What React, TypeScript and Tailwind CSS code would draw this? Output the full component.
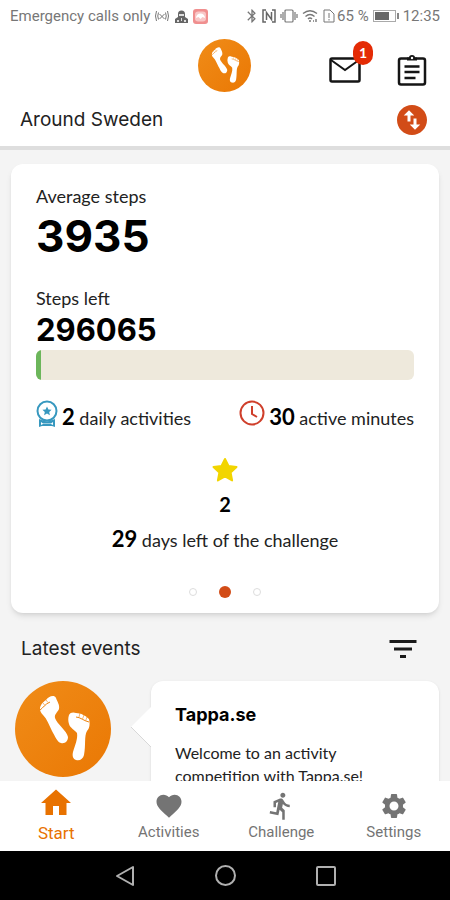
import { ReactNode } from "react"
import {
  MdSwapVerticalCircle,
  MdFilterList,
  MdHome,
  MdFavorite,
  MdDirectionsRun,
  MdSettings,
  MdBluetooth,
} from "react-icons/md"

const tabs = [
  { label: "Start", Icon: MdHome, active: true },
  { label: "Activities", Icon: MdFavorite },
  { label: "Challenge", Icon: MdDirectionsRun },
  { label: "Settings", Icon: MdSettings },
]

const Feet = ({ className }: { className: string }) => (
  <svg viewBox="0 0 96 96" className={className} aria-hidden="true">
    <defs>
      <linearGradient id="orange" x1="0" y1="0" x2="1" y2="1">
        <stop offset="0" stopColor="#f08c18" />
        <stop offset="1" stopColor="#ea7804" />
      </linearGradient>
    </defs>
    <circle cx="48" cy="48" r="48" fill="url(#orange)" />
    <g fill="#fff">
      <path d="M25 28C25 24 28 21 31 19C33 16 39 13 41 17C42 20 45 24 44 28C43 31 39 33 40 37C42 43 52 50 53 56C53 60 50 63 46 62C42 61 40 55 37 50C34 44 32 38 28 34C26 32 25 30 25 28Z" />
      <path d="M54 34C55 31 59 31 61 32C66 32 71 35 74 38C75 42 75 47 72 50C69 55 71 64 69 74C68 78 65 80 61 79C58 78 57 75 58 71C60 64 63 58 62 52C60 49 55 47 54 43C53 40 53 37 54 34Z" />
    </g>
    <g fill="none" stroke="#ee8510">
      <path d="M25 29C28 27 30 23 35 21" />
      <path d="M28 22l2 2.500M31 19l2 2.500" strokeWidth="0.600" />
      <path d="M61 36C65 36 69 40 74 41" />
      <path d="M65 32l-1 4M69 34l-1.500 4M72 36l-1.500 4" strokeWidth="0.600" />
    </g>
  </svg>
)

const Strong = ({ children }: { children: ReactNode }) => (
  <span className="text-[22px] font-bold text-black">{children}</span>
)

const StatusBar = () => (
  <div className="flex h-8 items-center justify-between pr-2.5 pl-2.5 font-['Roboto',sans-serif] text-[15px] text-[#777]">
    <div className="flex items-center gap-1">
      <span>Emergency calls only</span>
      <svg viewBox="0 0 15 14" className="h-3.5 w-4" fill="none" stroke="currentColor">
        <path d="M2 2Q0 7 2 12M4 3.500Q2.500 7 4 10.500M13 2Q15 7 13 12M11 3.500Q12.500 7 11 10.500M5 10L10 5M5 5L10 10" />
      </svg>
      <svg viewBox="0 0 15 15" className="size-[15px]">
        <path d="M4 5a3.500 3.500 0 0 1 7 0v3l3 2v4H1v-4l3-2z" fill="#666" />
        <path d="M5 5h5v2H5zM3 11h2v2H3zM10 11h2v2h-2zM7 9h1v3H7z" fill="#ddd" />
      </svg>
      <svg viewBox="0 0 15 15" className="size-[15px]">
        <rect width="15" height="15" rx="3" fill="#f08f8f" />
        <rect x="2" y="2.500" width="11" height="10" rx="3" fill="#fff" opacity="0.500" />
        <path d="M3 9a4.500 4.500 0 0 1 9 0l-2.500-1L7.500 10 5.500 8z" fill="#fff" />
      </svg>
    </div>
    <div className="flex items-center">
      <MdBluetooth className="size-4" />
      <svg viewBox="0 0 14 14" className="ml-0.5 size-3.5" fill="none" stroke="#666" strokeWidth="1.500">
        <path d="M4 1H1v12h3M10 1h3v12h-3M4.500 11V3.500l5 7V3" />
      </svg>
      <svg viewBox="0 0 18 14" className="ml-1 h-3.5 w-[18px]" fill="none" stroke="#777" strokeWidth="1.200">
        <rect x="5" y="1" width="8" height="12" rx="1" />
        <path d="M3 3v8M15 3v8M1 5v4M17 5v4" />
      </svg>
      <svg viewBox="0 0 17 14" className="ml-1 h-3.5 w-[17px]" fill="none" stroke="#777" strokeWidth="1.400">
        <path d="M1 4.500Q8 -1 15 4.500M3.500 7.500Q8 3.500 12.500 7.500M6 10Q8 8 10 10" />
        <path d="M7 12h2M11 12h1M14 10v3" />
      </svg>
      <svg viewBox="0 0 12 14" className="ml-1 h-4 w-3" fill="none" stroke="currentColor">
        <path d="M1 1h6l4 4v8H1zM6 4v5M6 10v1.500" />
      </svg>
      <span className="ml-0.5">65 %</span>
      <svg viewBox="0 0 26 12" className="mx-1 h-3 w-[26px]">
        <rect x="0.500" y="0.500" width="22" height="11" fill="none" stroke="#aaa" />
        <rect x="2" y="2" width="14" height="8" fill="#666" />
        <path d="M24 3h2v6h-2z" fill="#888" />
      </svg>
      <span>12:35</span>
    </div>
  </div>
)

const App = () => {
  return (
    <div className="flex h-screen flex-col overflow-hidden bg-[#f4f4f4] font-['Lato',sans-serif] text-[#222]">
      <header className="relative z-10 border-b-4 border-[#dedede] bg-white">
        <StatusBar />
        <div className="grid grid-cols-3 items-center px-5 pt-[7px]">
          <Feet className="col-start-2 size-[53px] justify-self-center" />
          <div className="flex items-center justify-end gap-9 pt-2 pr-[3px]">
            <button aria-label="Messages" className="relative">
              <svg viewBox="0 0 32 26" className="h-[26px] w-8" fill="none" stroke="#151515" strokeWidth="2.500">
                <rect x="1.500" y="1.500" width="29" height="23" rx="1.500" />
                <path d="M2 3L16 13L30 3" strokeWidth="2" />
              </svg>
              <span className="absolute -top-4 -right-3 flex h-6 w-5 items-center justify-center rounded-full bg-[#e42b05] text-sm font-bold text-white">
                1
              </span>
            </button>
            <button aria-label="Activity log">
              <svg viewBox="0 0 30 32" className="h-8 w-[30px]" fill="none" stroke="#151515" strokeWidth="2.500">
                <rect x="2" y="4.500" width="26" height="26" rx="2" />
                <path d="M10 3.500h2a3 2.500 0 0 1 6 0h2v3H10z" fill="#151515" stroke="none" />
                <circle cx="15" cy="4" r="1.200" fill="#fff" stroke="none" />
                <path d="M7.500 12.500h15M7.500 18h15M7.500 24h11" />
              </svg>
            </button>
          </div>
        </div>
        <div className="flex items-center justify-between px-5 pt-2.5 pb-2">
          <h1 className="font-['Inter',sans-serif] text-[19px]">Around Sweden</h1>
          <button aria-label="Switch challenge">
            <MdSwapVerticalCircle className="size-9 text-[#d24c17]" />
          </button>
        </div>
      </header>

      <main className="min-h-0 flex-1 overflow-hidden px-[11px] pt-3.5">
        <section className="rounded-xl bg-white px-[25px] pt-[18px] pb-[15px] shadow-md">
          <p className="text-lg">Average steps</p>
          <p className="font-['Inter',sans-serif] text-[44px] leading-[52px] font-bold text-black">3935</p>
          <p className="mt-[22px] text-lg">Steps left</p>
          <p className="font-['Inter',sans-serif] text-[31px] leading-9 font-bold text-black">296065</p>
          <div className="mt-0.5 h-[30px] overflow-hidden rounded-md bg-[#eee9dc]">
            <div className="h-full w-[5px] bg-[#6cb65b]" />
          </div>
          <div className="mt-5 flex items-center justify-between text-lg">
            <div className="flex items-start gap-1">
              <svg viewBox="0 0 22 28" className="h-7 w-[22px]" fill="none" stroke="#3798bf" strokeWidth="2">
                <circle cx="11" cy="11" r="9.500" />
                <path d="M3 19l3 1q5 2.500 10 0l3-1v8l-3-1H6l-3 1z" fill="#3798bf" stroke="none" />
                <path d="M5 22l2 1.500h8l2-1.500v3l-2-1H7l-2 1z" fill="#fff" stroke="none" />
                <path
                  d="M11 6.500l1.400 3 3.200.3-2.400 2.200.7 3.200-2.900-1.700-2.900 1.700.7-3.200-2.400-2.200 3.200-.3z"
                  fill="#3798bf"
                  stroke="none"
                />
              </svg>
              <p>
                <Strong>2</Strong> daily activities
              </p>
            </div>
            <div className="flex items-start gap-1">
              <svg viewBox="0 0 26 26" className="size-[26px]" fill="none" stroke="#cf3f2b" strokeWidth="2">
                <circle cx="13" cy="13" r="11.500" />
                <path d="M13 6v8l5 3" />
              </svg>
              <p>
                <Strong>30</Strong> active minutes
              </p>
            </div>
          </div>
          <div className="mt-5 flex flex-col items-center">
            <svg viewBox="0 0 32 32" className="size-8" fill="#f2d500" stroke="#f2d500" strokeWidth="2" strokeLinejoin="round">
              <path d="M16 5l3.500 7 8 1-5.900 5.500 1.500 8-7.100-4-7.100 4 1.500-8L4.500 13l8-1z" />
            </svg>
            <p className="mt-1 text-xl font-bold text-black">2</p>
            <p className="mt-1 text-lg">
              <Strong>29</Strong> days left of the challenge
            </p>
            <div className="mt-[30px] flex items-center gap-[22px]">
              <span className="size-2 rounded-full border border-[#ddd]" />
              <span className="size-3 rounded-full bg-[#d24c17]" />
              <span className="size-2 rounded-full border border-[#ddd]" />
            </div>
          </div>
        </section>

        <div className="flex items-center justify-between px-2.5 pt-[18px] pb-3.5">
          <h2 className="font-['Inter',sans-serif] text-[19px]">Latest events</h2>
          <button aria-label="Filter events" className="pr-2">
            <MdFilterList className="size-9 text-[#1a1a1a]" />
          </button>
        </div>

        <div className="flex items-start gap-10 pl-1">
          <Feet className="size-24 shrink-0" />
          <article className="relative h-40 flex-1 rounded-xl bg-white px-6 pt-5 shadow">
            <svg viewBox="0 0 22 44" className="absolute top-6 -left-5 h-11 w-[22px]">
              <path d="M22 0L0 22L22 44z" fill="#fff" />
              <path d="M0 22L20 42" stroke="#d8d8d8" fill="none" />
            </svg>
            <h3 className="font-['Inter',sans-serif] text-lg font-bold text-black">Tappa.se</h3>
            <p className="mt-3 max-w-52 text-base leading-[23px]">Welcome to an activity competition with Tappa.se!</p>
          </article>
        </div>
      </main>

      <nav className="z-10 grid grid-cols-4 bg-white font-['Roboto',sans-serif]">
        {tabs.map(({ label, Icon, active }) => (
          <a
            key={label}
            href="#"
            className={
              active
                ? "flex h-[70px] flex-col items-center pt-1 text-[17px] text-[#e87200]"
                : "flex h-[70px] flex-col items-center pt-2.5 text-[15px] text-[#747474]"
            }
          >
            <Icon className={active ? "size-9" : "size-[30px]"} />
            <span>{label}</span>
          </a>
        ))}
      </nav>

      <div className="flex h-[49px] shrink-0 items-center justify-center gap-20 bg-black">
        <button aria-label="Back">
          <svg viewBox="0 0 20 22" className="h-[22px] w-5" fill="none" stroke="#b0b0b0" strokeWidth="2">
            <path d="M18 2v18L2 11z" strokeLinejoin="round" />
          </svg>
        </button>
        <button aria-label="Home" className="size-[21px] rounded-full border-2 border-[#b0b0b0]" />
        <button aria-label="Recent apps" className="size-5 rounded-xs border-2 border-[#b0b0b0]" />
      </div>
    </div>
  )
}

export default App
